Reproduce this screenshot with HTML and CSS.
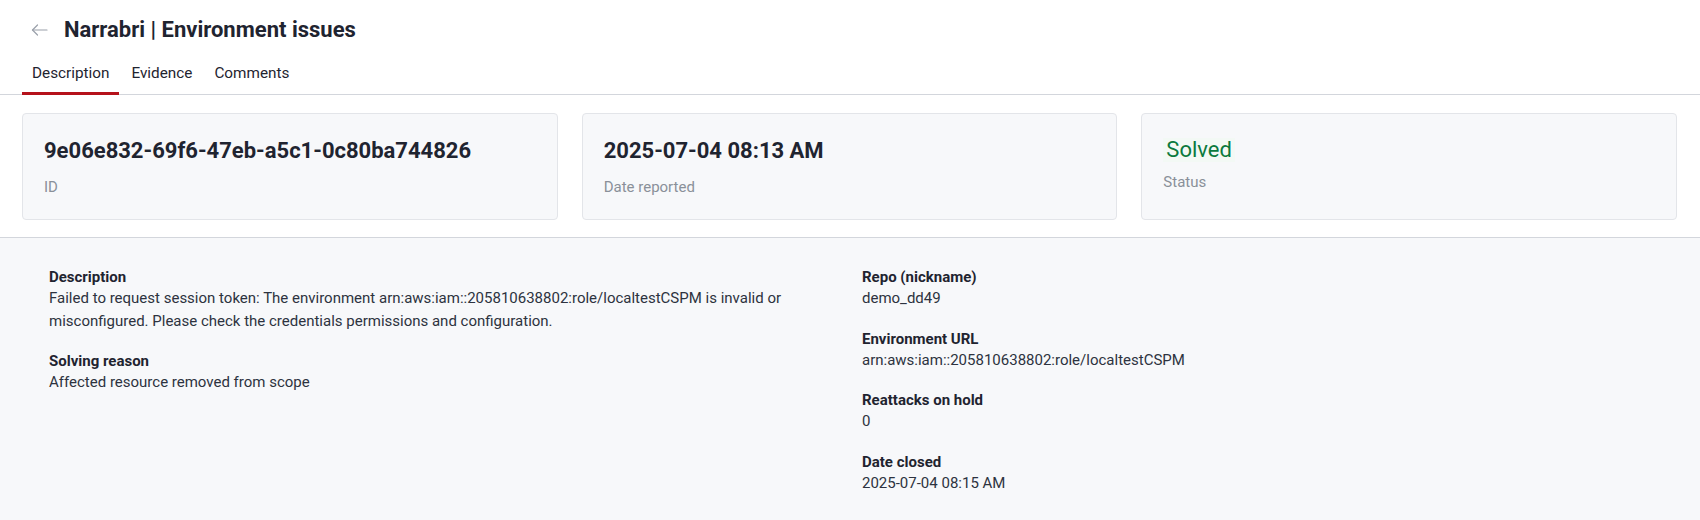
FILE: index.html
```html
<!DOCTYPE html>
<html lang="en">
<head>
    <meta charset="UTF-8">
    <meta name="viewport" content="width=device-width, initial-scale=1.0">
    <title>Narrabri | Environment issues</title>
    <link rel="stylesheet" href="styles.css">
</head>
<body>
    <header class="header">
        <div class="title-row">
            <button class="back-btn" aria-label="Back">
                <svg width="17" height="12" viewBox="0 0 17 12" fill="none" stroke="#9aa0aa" stroke-width="1.2" stroke-linecap="round" stroke-linejoin="round">
                    <path d="M16 6H1.5"/>
                    <path d="M6.5 1L1.5 6l5 5"/>
                </svg>
            </button>
            <h1 class="title">Narrabri | Environment issues</h1>
        </div>
        <nav class="tabs">
            <a class="tab active">Description</a>
            <a class="tab">Evidence</a>
            <a class="tab">Comments</a>
        </nav>
    </header>

    <section class="cards">
        <div class="card">
            <div class="card-value">9e06e832-69f6-47eb-a5c1-0c80ba744826</div>
            <div class="card-label">ID</div>
        </div>
        <div class="card">
            <div class="card-value">2025-07-04 08:13 AM</div>
            <div class="card-label">Date reported</div>
        </div>
        <div class="card">
            <div class="status-badge">Solved</div>
            <div class="card-label status-label">Status</div>
        </div>
    </section>

    <section class="details">
        <div class="details-col">
            <div class="field">
                <div class="field-label">Description</div>
                <div class="field-value">Failed to request session token: The environment arn:aws:iam::205810638802:role/localtestCSPM is invalid or misconfigured. Please check the credentials permissions and configuration.</div>
            </div>
            <div class="field">
                <div class="field-label">Solving reason</div>
                <div class="field-value">Affected resource removed from scope</div>
            </div>
        </div>
        <div class="details-col">
            <div class="field">
                <div class="field-label">Repo (nickname)</div>
                <div class="field-value">demo_dd49</div>
            </div>
            <div class="field">
                <div class="field-label">Environment URL</div>
                <div class="field-value">arn:aws:iam::205810638802:role/localtestCSPM</div>
            </div>
            <div class="field">
                <div class="field-label">Reattacks on hold</div>
                <div class="field-value">0</div>
            </div>
            <div class="field">
                <div class="field-label">Date closed</div>
                <div class="field-value">2025-07-04 08:15 AM</div>
            </div>
        </div>
    </section>
</body>
</html>
```

FILE: styles.css
```css
body {
    margin: 0;
    padding: 0;
    font-family: Roboto, 'Liberation Sans', sans-serif;
    color: #2d3340;
    background: #f7f8fa;
}

.header {
    background: #fff;
    padding: 14px 22px 0;
    border-bottom: 1px solid #d3d6dc;
}

.title-row {
    display: flex;
    align-items: center;
    height: 32px;
}

.back-btn {
    display: flex;
    align-items: center;
    background: none;
    border: none;
    padding: 0;
    margin-left: 9px;
    margin-right: 16px;
    cursor: pointer;
}

.title {
    margin: 0;
    font-size: 22px;
    line-height: 32px;
    font-weight: 700;
    color: #1f2430;
}

.tabs {
    display: flex;
    gap: 2px;
    margin-top: 17px;
    margin-bottom: -1px;
}

.tab {
    font-size: 15.3px;
    line-height: 20px;
    padding: 0 10px 9px;
    color: #1f2430;
    border-bottom: 3px solid transparent;
    cursor: pointer;
}

.tab.active {
    border-bottom-color: #b5121b;
}

.cards {
    background: #fff;
    display: grid;
    grid-template-columns: repeat(3, 1fr);
    gap: 24px;
    padding: 18px 23px 17px 22px;
    border-bottom: 1px solid #d3d6dc;
}

.card {
    background: #f7f8fa;
    border: 1px solid #e3e5e9;
    border-radius: 4px;
    padding: 23px 21px 22px;
}

.card-value {
    font-size: 22px;
    line-height: 28px;
    font-weight: 700;
    color: #1f2430;
}

.card-label {
    margin-top: 12px;
    font-size: 15px;
    line-height: 20px;
    color: #8a9099;
}

.status-badge {
    display: inline-block;
    margin-top: 1px;
    font-size: 22px;
    line-height: 24px;
    padding: 0 3px;
    color: #0b7a3e;
    background: #f3f9f5;
}

.status-label {
    margin-top: 10px;
}

.details {
    display: grid;
    grid-template-columns: 1fr 1fr;
    column-gap: 24px;
    padding: 30px 49px;
}

.field {
    margin-bottom: 20px;
}

.field-label {
    font-size: 15px;
    line-height: 19px;
    font-weight: 700;
    color: #1f2430;
}

.field-value {
    font-size: 15px;
    line-height: 22.5px;
    color: #2d3340;
}
```
